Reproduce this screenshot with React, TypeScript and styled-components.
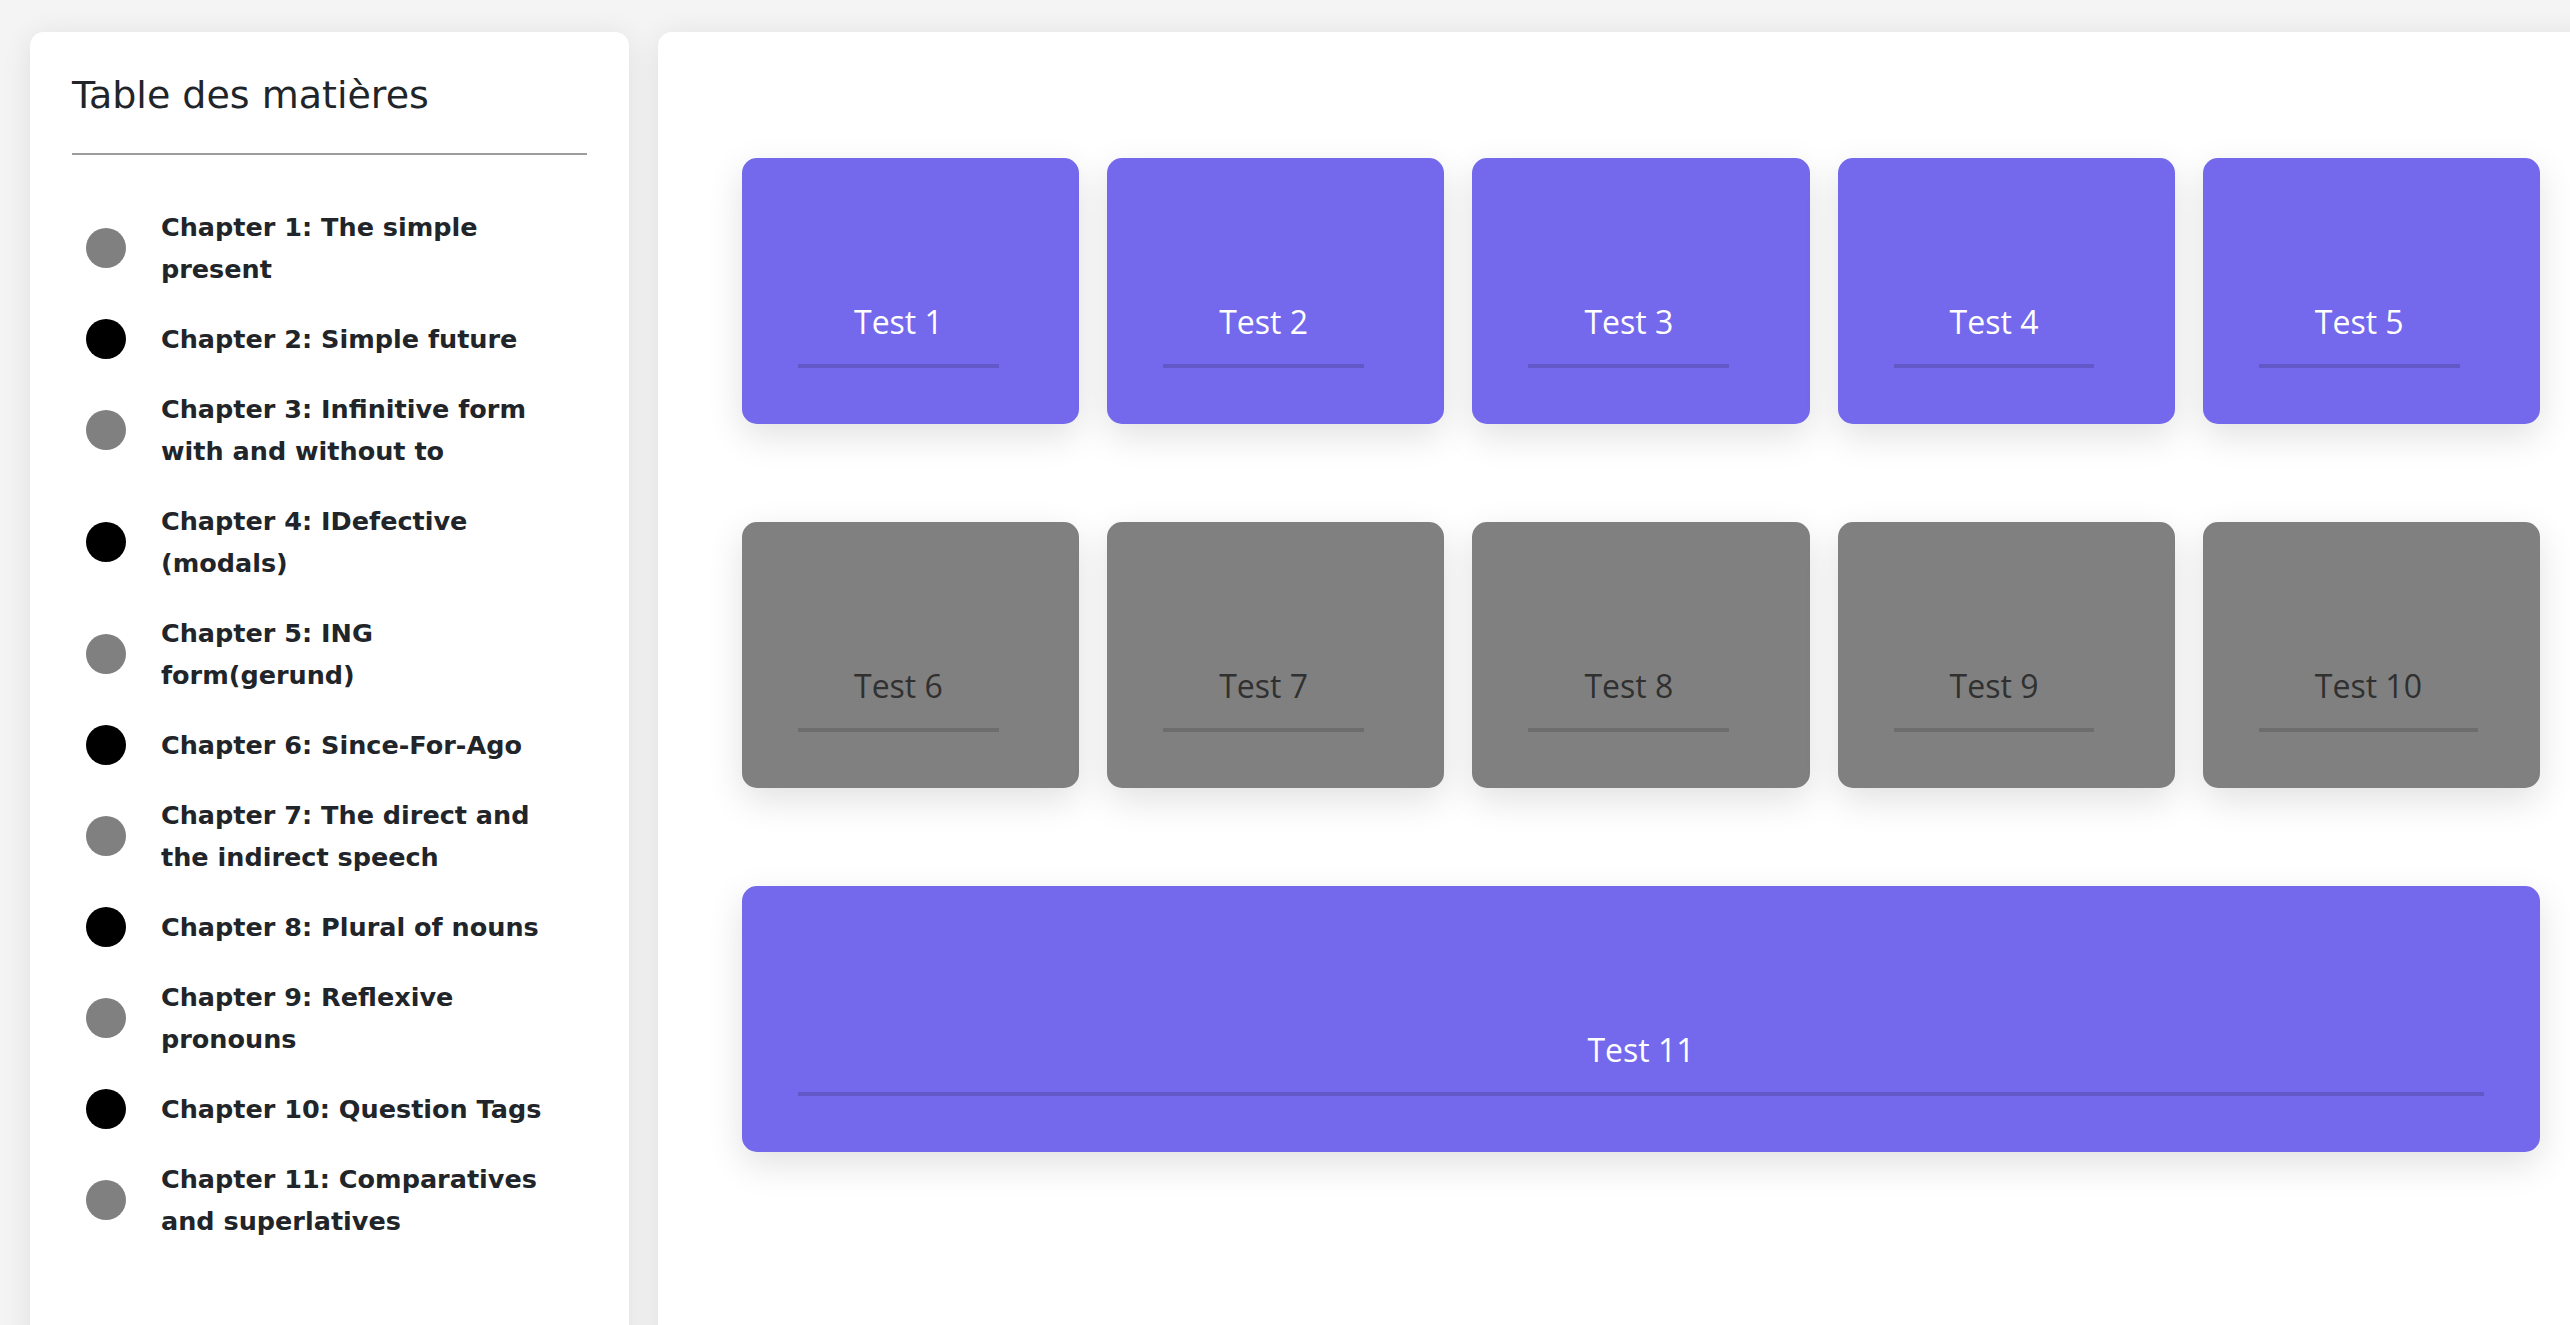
import React from "react";
import styled, { createGlobalStyle } from "styled-components";

const GlobalStyle = createGlobalStyle`
  html, body {
    margin: 0;
    padding: 0;
    background: #f4f4f4;
    overflow: hidden;
    font-family: "DejaVu Sans", "Open Sans", sans-serif;
    color: #212529;
  }
  * { box-sizing: border-box; }
`;

const Page = styled.div`
  display: flex;
  align-items: stretch;
  gap: 29px;
  height: 100vh;
  padding: 32px 0 0 30px;
  overflow: hidden;
`;

const Sidebar = styled.aside`
  flex: none;
  width: 599px;
  height: calc(100% + 40px);
  background: #fff;
  border-radius: 14px;
  box-shadow: 0 4px 30px rgba(0, 0, 0, 0.09);
  padding: 41px 42px 0 42px;
`;

const Title = styled.h2`
  margin: 0;
  font-family: "DejaVu Sans", sans-serif;
  font-size: 38px;
  line-height: 44px;
  font-weight: 400;
  color: #212529;
`;

const Divider = styled.div`
  margin-top: 36px;
  height: 2px;
  background: #9c9c9c;
`;

const ChapterList = styled.ul`
  list-style: none;
  margin: 51px 0 0 0;
  padding: 0;
  display: flex;
  flex-direction: column;
  gap: 28px;
`;

const ChapterItem = styled.li`
  display: flex;
  align-items: center;
`;

const Dot = styled.span<{ $done: boolean }>`
  flex: none;
  width: 40px;
  height: 40px;
  border-radius: 50%;
  margin-left: 14px;
  margin-right: 35px;
  background: ${(p) => (p.$done ? "#000" : "#808080")};
`;

const ChapterText = styled.span`
  max-width: 396px;
  font-family: "DejaVu Sans", sans-serif;
  font-size: 25.5px;
  line-height: 42px;
  font-weight: 700;
  color: #212529;
`;

const Main = styled.main`
  flex: none;
  width: 1966px;
  height: calc(100% + 40px);
  background: #fff;
  border-radius: 14px;
  box-shadow: 0 4px 30px rgba(0, 0, 0, 0.09);
  padding: 126px 84px 0 84px;
`;

const TestGrid = styled.div`
  display: grid;
  grid-template-columns: repeat(5, 1fr);
  column-gap: 28px;
  row-gap: 98px;
`;

const TestCard = styled.div<{ $locked: boolean; $wide?: boolean }>`
  grid-column: ${(p) => (p.$wide ? "1 / -1" : "auto")};
  height: 266px;
  border-radius: 15px;
  background: ${(p) => (p.$locked ? "#808080" : "#7468ec")};
  box-shadow: 0 12px 36px rgba(0, 0, 0, 0.12);
  display: flex;
  flex-direction: column;
  justify-content: flex-end;
  align-items: flex-start;
  padding: 0 56px 56px 56px;
`;

const TestTitle = styled.div<{ $locked: boolean; $wide?: boolean }>`
  align-self: ${(p) => (p.$wide ? "stretch" : "flex-start")};
  padding: 0 56px 18px;
  font-family: "Open Sans", sans-serif;
  font-size: 32px;
  line-height: 48px;
  font-weight: 500;
  text-align: center;
  color: ${(p) => (p.$locked ? "#303030" : "#ffffff")};
  border-bottom: 4px solid rgba(0, 0, 0, 0.15);
`;

const chapters = [
  { title: "Chapter 1: The simple present", done: false },
  { title: "Chapter 2: Simple future", done: true },
  { title: "Chapter 3: Infinitive form with and without to", done: false },
  { title: "Chapter 4: IDefective (modals)", done: true },
  { title: "Chapter 5: ING form(gerund)", done: false },
  { title: "Chapter 6: Since-For-Ago", done: true },
  { title: "Chapter 7: The direct and the indirect speech", done: false },
  { title: "Chapter 8: Plural of nouns", done: true },
  { title: "Chapter 9: Reflexive pronouns", done: false },
  { title: "Chapter 10: Question Tags", done: true },
  { title: "Chapter 11: Comparatives and superlatives", done: false },
];

const tests = Array.from({ length: 11 }, (_, i) => ({
  label: `Test ${i + 1}`,
  locked: i >= 5 && i < 10,
  wide: i === 10,
}));

export default function App() {
  return (
    <>
      <GlobalStyle />
      <Page>
        <Sidebar>
          <Title>Table des matières</Title>
          <Divider />
          <ChapterList>
            {chapters.map((c) => (
              <ChapterItem key={c.title}>
                <Dot $done={c.done} />
                <ChapterText>{c.title}</ChapterText>
              </ChapterItem>
            ))}
          </ChapterList>
        </Sidebar>
        <Main>
          <TestGrid>
            {tests.map((t) => (
              <TestCard key={t.label} $locked={t.locked} $wide={t.wide}>
                <TestTitle $locked={t.locked} $wide={t.wide}>
                  {t.label}
                </TestTitle>
              </TestCard>
            ))}
          </TestGrid>
        </Main>
      </Page>
    </>
  );
}
